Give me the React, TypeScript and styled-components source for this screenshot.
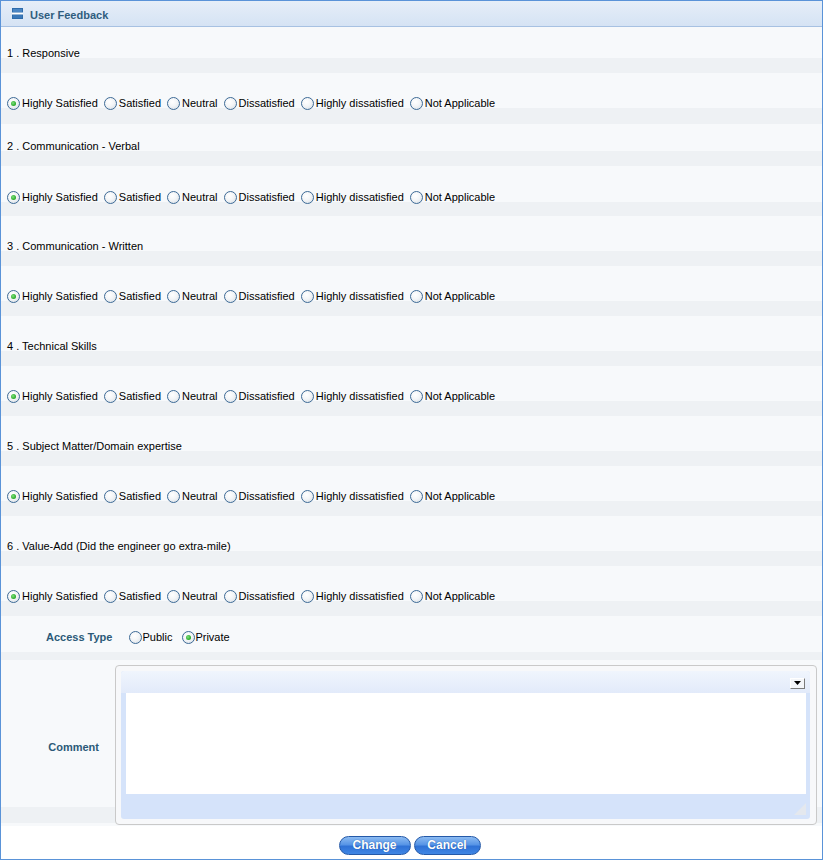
import React from "react";
import styled, { createGlobalStyle } from "styled-components";

const Global = createGlobalStyle`
  html, body { margin: 0; padding: 0; background: #ffffff; }
  body { font-family: "Liberation Sans", Arial, sans-serif; font-size: 11px; color: #000; }
  * { box-sizing: border-box; }
`;

const Frame = styled.div`
  width: 823px;
  height: 860px;
  border: 1px solid #5a93d8;
  background: #ffffff;
  display: flex;
  flex-direction: column;
  overflow: hidden;
`;

const Header = styled.div`
  height: 26px;
  flex: none;
  display: flex;
  align-items: center;
  gap: 7px;
  padding: 0 0 0 11px;
  background: linear-gradient(to bottom, #e6eef8, #d5e3f4);
  border-bottom: 1px solid #a7c1e2;
`;

const HeaderTitle = styled.span`
  font-weight: bold;
  font-size: 11px;
  color: #2f5d7e;
  padding-top: 2px;
`;

const Row = styled.div<{ $h: number; $band: number; $pad?: number }>`
  flex: none;
  height: ${(p) => p.$h + p.$band}px;
  border-bottom: ${(p) => p.$band}px solid #eef1f4;
  background: #f7f9fb;
  display: flex;
  align-items: flex-end;
  padding-left: ${(p) => p.$pad ?? 6}px;
`;

const Question = styled.span`
  line-height: 11px;
  margin-bottom: -1px;
`;

const RadioGroup = styled.div<{ $drop?: number }>`
  display: flex;
  align-items: center;
  line-height: 13px;
  margin-bottom: ${(p) => -(p.$drop ?? 0)}px;
`;

const RadioItem = styled.label<{ $gap: number; $after: number }>`
  display: inline-flex;
  align-items: center;
  gap: ${(p) => p.$gap}px;
  margin-right: ${(p) => p.$after}px;
  white-space: nowrap;
`;

const Circle = styled.span<{ $on?: boolean }>`
  width: 13px;
  height: 13px;
  border-radius: 50%;
  border: 1px solid #3d6a96;
  background: radial-gradient(circle at 40% 35%, #ffffff 0%, #f3f5f7 45%, #d3dbe3 100%);
  display: inline-flex;
  align-items: center;
  justify-content: center;
  flex: none;
  &::after {
    content: "";
    display: ${(p) => (p.$on ? "block" : "none")};
    width: 5px;
    height: 5px;
    border-radius: 50%;
    background: radial-gradient(circle at 40% 40%, #7fe07f 0%, #25a825 70%, #1e8c1e 100%);
  }
`;

const AccessRow = styled.div`
  flex: none;
  height: 44px;
  border-bottom: 8px solid #eef1f4;
  background: #f7f9fb;
  display: flex;
  align-items: center;
  padding: 6px 0 0 45px;
  gap: 17px;
`;

const FieldLabel = styled.span`
  font-weight: bold;
  color: #2b5978;
  font-size: 11px;
`;

const CommentRow = styled.div`
  flex: none;
  height: 166px;
  display: flex;
  align-items: flex-start;
  padding-top: 5px;
  background: linear-gradient(
    to bottom,
    #f7f9fb 0px,
    #f7f9fb 147px,
    #eef1f4 147px,
    #eef1f4 163px,
    #f7f9fb 163px
  );
`;

const CommentLabel = styled(FieldLabel)`
  width: 114px;
  flex: none;
  text-align: right;
  padding-right: 16px;
  align-self: center;
  padding-top: 2px;
`;

const EditorBox = styled.div`
  width: 702px;
  height: 160px;
  border: 1px solid #c9c9c9;
  border-radius: 4px;
  background: #f7f8fa;
  padding: 5px 6px 5px 5px;
  display: flex;
`;

const EditorPanel = styled.div`
  flex: 1;
  border-radius: 3px;
  background: #d5e3fa;
  display: flex;
  flex-direction: column;
  overflow: hidden;
`;

const EditorToolbar = styled.div`
  height: 22px;
  flex: none;
  background: linear-gradient(to bottom, #f0f5fd, #e2eafa);
  display: flex;
  justify-content: flex-end;
  align-items: center;
  padding: 2px 5px 0 0;
`;

const DropButton = styled.span`
  width: 15px;
  height: 11px;
  background: #f4f6f9;
  border-top: 1px solid #ffffff;
  border-left: 1px solid #ffffff;
  border-right: 1px solid #7b7b7b;
  border-bottom: 1px solid #7b7b7b;
  display: flex;
  align-items: center;
  justify-content: center;
`;

const EditorArea = styled.div`
  height: 101px;
  flex: none;
  margin: 0 4px 0 5px;
  background: #ffffff;
`;

const EditorFooter = styled.div`
  flex: 1;
  display: flex;
  justify-content: flex-end;
  align-items: flex-end;
  padding: 0 4px 4px 0;
`;

const ButtonRow = styled.div`
  flex: 1;
  background: #ffffff;
  display: flex;
  justify-content: center;
  align-items: flex-start;
  gap: 3px;
  padding-top: 10px;
  padding-right: 4px;
`;

const PillButton = styled.button<{ $w: number }>`
  width: ${(p) => p.$w}px;
  height: 19px;
  border-radius: 10px;
  border: 1px solid #2459a8;
  background: linear-gradient(to bottom, #8cbbf2 0%, #5795e6 45%, #2f72d6 55%, #3f86e4 100%);
  color: #ffffff;
  font-family: "Liberation Sans", Arial, sans-serif;
  font-weight: bold;
  font-size: 12px;
  padding: 0;
  line-height: 17px;
  text-shadow: 0 0 1px #1d4f9c;
  cursor: pointer;
`;

const options = [
  "Highly Satisfied",
  "Satisfied",
  "Neutral",
  "Dissatisfied",
  "Highly dissatisfied",
  "Not Applicable",
];

const questions = [
  "Responsive",
  "Communication - Verbal",
  "Communication - Written",
  "Technical Skills",
  "Subject Matter/Domain expertise",
  "Value-Add (Did the engineer go extra-mile)",
];

const layout: [number, number, number, number][] = [
  [31, 15, 35, 16],
  [27, 15, 36, 14],
  [35, 15, 35, 15],
  [35, 15, 35, 15],
  [35, 15, 35, 15],
  [35, 15, 35, 15],
];

const MinusIcon = () => (
  <svg width="11" height="11" viewBox="0 0 11 11">
    <rect x="0" y="0" width="11" height="11" fill="#2e6cab" />
    <rect x="1" y="1" width="9" height="3" fill="#4a86c4" />
    <rect x="1" y="7" width="9" height="3" fill="#3a78b8" />
    <rect x="0" y="4.5" width="11" height="2" fill="#ffffff" />
  </svg>
);

export default function App() {
  return (
    <>
      <Global />
      <Frame>
        <Header>
          <MinusIcon />
          <HeaderTitle>User Feedback</HeaderTitle>
        </Header>
        {questions.map((q, i) => {
          const [qh, qb, rh, rb] = layout[i];
          return (
            <React.Fragment key={q}>
              <Row $h={qh} $band={qb}>
                <Question>
                  {i + 1} . {q}
                </Question>
              </Row>
              <Row $h={rh} $band={rb}>
                <RadioGroup $drop={2}>
                  {options.map((o, j) => (
                    <RadioItem key={o} $gap={2} $after={6}>
                      <Circle $on={j === 0} />
                      {o}
                    </RadioItem>
                  ))}
                </RadioGroup>
              </Row>
            </React.Fragment>
          );
        })}
        <AccessRow>
          <FieldLabel>Access Type</FieldLabel>
          <RadioGroup>
            <RadioItem $gap={0} $after={10}>
              <Circle />
              Public
            </RadioItem>
            <RadioItem $gap={0} $after={0}>
              <Circle $on />
              Private
            </RadioItem>
          </RadioGroup>
        </AccessRow>
        <CommentRow>
          <CommentLabel>Comment</CommentLabel>
          <EditorBox>
            <EditorPanel>
              <EditorToolbar>
                <DropButton>
                  <svg width="7" height="4" viewBox="0 0 7 4">
                    <polygon points="0,0 7,0 3.5,4" fill="#000000" />
                  </svg>
                </DropButton>
              </EditorToolbar>
              <EditorArea />
              <EditorFooter>
                <svg width="12" height="12" viewBox="0 0 12 12">
                  <polygon points="12,0 12,12 0,12" fill="#e4e8ee" />
                </svg>
              </EditorFooter>
            </EditorPanel>
          </EditorBox>
        </CommentRow>
        <ButtonRow>
          <PillButton $w={72}>Change</PillButton>
          <PillButton $w={67}>Cancel</PillButton>
        </ButtonRow>
      </Frame>
    </>
  );
}
